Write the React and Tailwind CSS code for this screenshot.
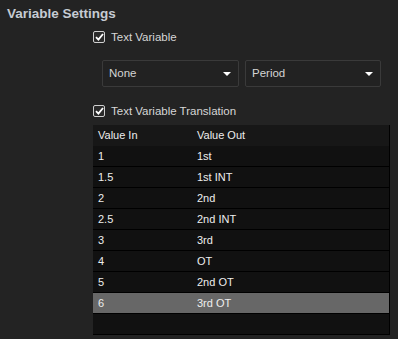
const ROWS = [
  ["1", "1st"],
  ["1.5", "1st INT"],
  ["2", "2nd"],
  ["2.5", "2nd INT"],
  ["3", "3rd"],
  ["4", "OT"],
  ["5", "2nd OT"],
  ["6", "3rd OT"],
];

function Checkbox({ label }) {
  return (
    <div className="flex items-center gap-[6px] h-[14px]">
      <div className="w-[12px] h-[12px] rounded-[2px] border-[1.5px] border-[#cfcfcf] bg-[#2a2a2a] flex items-center justify-center">
        <svg width="9" height="8" viewBox="0 0 9 8">
          <polyline points="1,4.2 3.4,6.6 8,1" fill="none" stroke="#ffffff" strokeWidth="1.8" />
        </svg>
      </div>
      <span className="text-[11.5px] leading-[14px] text-[#d6d6d6]">{label}</span>
    </div>
  );
}

function Select({ value, width }) {
  return (
    <div
      className="h-[27px] rounded-[2px] border border-[#3a3a3a] bg-[#222222] flex items-center justify-between pl-[6px] pr-[7px]"
      style={{ width }}
    >
      <span className="text-[11.5px] text-[#d4d4d4]">{value}</span>
      <svg width="8" height="4" viewBox="0 0 8 4">
        <polygon points="0,0 8,0 4,4" fill="#ffffff" />
      </svg>
    </div>
  );
}

export default function App() {
  return (
    <div className="w-[398px] h-[339px] overflow-hidden bg-[#232323] font-['Liberation_Sans',Arial,sans-serif]">
      <div className="pl-[7px] pt-[5px] text-[13.5px] leading-[18px] font-bold text-[#c6cbd3]">Variable Settings</div>

      <div className="ml-[93px] mt-[7px]">
        <Checkbox label="Text Variable" />
      </div>

      <div className="ml-[102px] mt-[16px] flex gap-[6px]">
        <Select value="None" width={137} />
        <Select value="Period" width={136} />
      </div>

      <div className="ml-[93px] mt-[17px]">
        <Checkbox label="Text Variable Translation" />
      </div>

      <div className="ml-[93px] mt-[7px] w-[297px] h-[210px] bg-[#111111] border-r border-b border-black flex flex-col text-[11px] text-[#eeeeee]">
        <div className="h-[21px] shrink-0 bg-[#171717] flex items-center pl-[5px]">
          <span className="w-[99px]">Value In</span>
          <span>Value Out</span>
        </div>
        {ROWS.map(([a, b], i) => (
          <div
            key={a}
            className={
              i === ROWS.length - 1
                ? "h-[21px] shrink-0 border-b border-black bg-[#676767] flex items-center pl-[5px]"
                : "h-[21px] shrink-0 border-b border-black flex items-center pl-[5px]"
            }
          >
            <span className="w-[99px]">{a}</span>
            <span>{b}</span>
          </div>
        ))}
      </div>
    </div>
  );
}
